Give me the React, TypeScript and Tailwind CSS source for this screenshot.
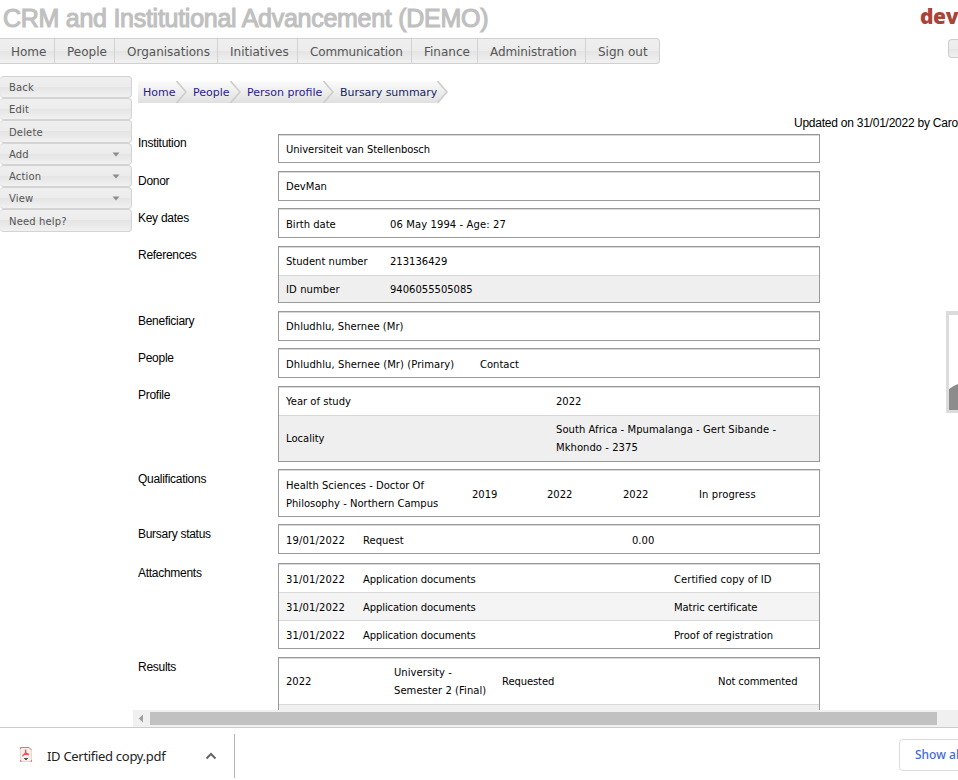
import type { ReactNode } from 'react';

type Cell = { w: string; text: ReactNode };
type Row = { h: string; bg?: string; cells: Cell[] };
type Section = { label: string; box: string; gap: string; labelTop: string; rows: Row[] };

const nav = [
  { text: 'Home', w: 'w-[55px] pl-[11px]' },
  { text: 'People', w: 'w-[60px] pl-3' },
  { text: 'Organisations', w: 'w-[103px] pl-3' },
  { text: 'Initiatives', w: 'w-[80px] pl-3' },
  { text: 'Communication', w: 'w-[114px] pl-3 tracking-[-0.15px]' },
  { text: 'Finance', w: 'w-[66px] pl-3' },
  { text: 'Administration', w: 'w-[108px] pl-3 tracking-[-0.1px]' },
  { text: 'Sign out', w: 'w-[73px] pl-3' },
];

const side = [
  { text: 'Back', h: 'h-[22px]' },
  { text: 'Edit', h: 'h-[22px]' },
  { text: 'Delete', h: 'h-[23px]' },
  { text: 'Add', h: 'h-[22px]', arrow: true },
  { text: 'Action', h: 'h-[22px]', arrow: true },
  { text: 'View', h: 'h-[22px]', arrow: true },
  { text: 'Need help?', h: 'h-[23px]' },
];

const crumbs = [
  { text: 'Home', w: 'w-[49px]', pad: 'pl-[5px]', color: 'text-[#2a1a8c]' },
  { text: 'People', w: 'w-[54px]', pad: 'pl-[6px]', color: 'text-[#2a1a8c]' },
  { text: 'Person profile', w: 'w-[93px]', pad: 'pl-[6px]', color: 'text-[#2a1a8c]' },
  { text: 'Bursary summary', w: 'w-[114px]', pad: 'pl-[6px] tracking-[-0.05px]', color: 'text-[#14265e]' },
];

const sections: Section[] = [
  { label: 'Institution', box: 'h-[29px]', gap: 'mb-2', labelTop: 'pt-0', rows: [{ h: 'h-[29px]', cells: [{ w: 'w-[500px] tracking-[-0.07px]', text: 'Universiteit van Stellenbosch' }] }] },
  { label: 'Donor', box: 'h-[30px]', gap: 'mb-[7px]', labelTop: 'pt-px', rows: [{ h: 'h-[28px]', cells: [{ w: 'w-[500px]', text: 'DevMan' }] }] },
  { label: 'Key dates', box: 'h-[30px]', gap: 'mb-2', labelTop: 'pt-px', rows: [{ h: 'h-[31px]', cells: [{ w: 'w-[104px]', text: 'Birth date' }, { w: 'w-[400px] tracking-[0.1px]', text: '06 May 1994 - Age: 27' }] }] },
  {
    label: 'References', box: 'h-[57px]', gap: 'mb-2', labelTop: 'pt-0', rows: [
      { h: 'h-[28px]', cells: [{ w: 'w-[104px]', text: 'Student number' }, { w: 'w-[400px]', text: '213136429' }] },
      { h: 'h-[28px]', bg: 'bg-[#efefef]', cells: [{ w: 'w-[104px] tracking-[0.1px]', text: 'ID number' }, { w: 'w-[400px]', text: '9406055505085' }] },
    ],
  },
  { label: 'Beneficiary', box: 'h-[30px]', gap: 'mb-[7px]', labelTop: 'pt-px', rows: [{ h: 'h-[28px]', cells: [{ w: 'w-[500px] tracking-[0.05px]', text: 'Dhludhlu, Shernee (Mr)' }] }] },
  { label: 'People', box: 'h-[30px]', gap: 'mb-2', labelTop: 'pt-px', rows: [{ h: 'h-[31px]', cells: [{ w: 'w-[194px] tracking-[0.07px]', text: 'Dhludhlu, Shernee (Mr) (Primary)' }, { w: 'w-[300px]', text: 'Contact' }] }] },
  {
    label: 'Profile', box: 'h-[76px]', gap: 'mb-[7px]', labelTop: 'pt-0', rows: [
      { h: 'h-[28px]', cells: [{ w: 'w-[270px]', text: 'Year of study' }, { w: 'w-[250px]', text: '2022' }] },
      { h: 'h-[46px]', bg: 'bg-[#efefef]', cells: [{ w: 'w-[270px]', text: 'Locality' }, { w: 'w-[260px] tracking-[0.05px]', text: <>South Africa - Mpumalanga - Gert Sibande -<br />Mkhondo - 2375</> }] },
    ],
  },
  {
    label: 'Qualifications', box: 'h-[48px]', gap: 'mb-[7px]', labelTop: 'pt-px', rows: [{
      h: 'h-[49px]', cells: [
        { w: 'w-[186px]', text: <>Health Sciences - Doctor Of<br />Philosophy - Northern Campus</> },
        { w: 'w-[75px]', text: '2019' }, { w: 'w-[76px]', text: '2022' }, { w: 'w-[76px]', text: '2022' }, { w: 'w-[90px] tracking-[0.1px]', text: 'In progress' },
      ],
    }],
  },
  { label: 'Bursary status', box: 'h-[30px]', gap: 'mb-[9px]', labelTop: 'pt-px', rows: [{ h: 'h-[31px]', cells: [{ w: 'w-[77px] tracking-[0.15px]', text: '19/01/2022' }, { w: 'w-[269px]', text: 'Request' }, { w: 'w-[90px]', text: '0.00' }] }] },
  {
    label: 'Attachments', box: 'h-[86px]', gap: 'mb-2', labelTop: 'pt-px', rows: [
      { h: 'h-[28px] pt-[2px]', cells: [{ w: 'w-[77px] tracking-[0.15px]', text: '31/01/2022' }, { w: 'w-[311px] tracking-[-0.1px]', text: 'Application documents' }, { w: 'w-[120px] tracking-[0.05px]', text: 'Certified copy of ID' }] },
      { h: 'h-[28px] pt-[2px]', bg: 'bg-[#f4f4f4]', cells: [{ w: 'w-[77px] tracking-[0.15px]', text: '31/01/2022' }, { w: 'w-[311px] tracking-[-0.1px]', text: 'Application documents' }, { w: 'w-[120px] tracking-[-0.07px]', text: 'Matric certificate' }] },
      { h: 'h-[28px] pt-[2px]', cells: [{ w: 'w-[77px] tracking-[0.15px]', text: '31/01/2022' }, { w: 'w-[311px] tracking-[-0.1px]', text: 'Application documents' }, { w: 'w-[120px]', text: 'Proof of registration' }] },
    ],
  },
  {
    label: 'Results', box: 'h-[96px]', gap: 'mb-2', labelTop: 'pt-px', rows: [
      { h: 'h-[46px]', cells: [{ w: 'w-[108px]', text: '2022' }, { w: 'w-[108px] tracking-[0.05px]', text: <>University -<br />Semester 2 (Final)</> }, { w: 'w-[216px] tracking-[-0.1px]', text: 'Requested' }, { w: 'w-[90px] tracking-[-0.1px]', text: 'Not commented' }] },
      { h: 'h-[46px]', bg: 'bg-[#efefef]', cells: [] },
    ],
  },
];

const glossy = 'bg-[linear-gradient(#efefef_0%,#ececec_50%,#e4e4e4_50%,#f1f1f1_100%)]';

function SectionRow({ s }: { s: Section }) {
  return (
    <div className={`flex shrink-0 ${s.gap}`}>
      <div className={`w-[140px] shrink-0 font-['Liberation_Sans'] text-[12px] leading-[18px] tracking-[-0.28px] ${s.labelTop}`}>{s.label}</div>
      <div className={`w-[542px] shrink-0 overflow-hidden border border-[#999] ${s.box}`}>
        {s.rows.map((r, i) => (
          <div key={i} className={`flex items-center border-t border-[#d8d8d8] pl-[7px] ${r.h} ${r.bg ?? ''}`}>
            {r.cells.map((c, j) => (
              <div key={j} className={`shrink-0 whitespace-nowrap ${c.w}`}>{c.text}</div>
            ))}
          </div>
        ))}
      </div>
    </div>
  );
}

export default function App() {
  return (
    <div className="flex h-[780px] w-[958px] flex-col overflow-hidden bg-white font-['DejaVu_Sans',sans-serif] text-[10px] leading-[18px] text-black">
      <header className="flex h-[38px] shrink-0 justify-between">
        <h1 className="whitespace-nowrap pl-[3px] font-['Liberation_Sans'] text-[25px] leading-9 tracking-[-0.27px] text-[#c0c0c0] [-webkit-text-stroke:1.1px_#c0c0c0]">CRM and Institutional Advancement (DEMO)</h1>
        <div className="w-[38px] overflow-hidden whitespace-nowrap font-['Open_Sans'] text-[21px] font-extrabold leading-[33px] tracking-[-0.4px] text-[#a94439]">dev</div>
      </header>
      <div className="flex h-[38px] shrink-0 items-start justify-between">
        <nav className={`flex h-[26px] w-[660px] overflow-hidden rounded-r border-y border-r border-[#d0d0d0] text-[12px] leading-[26px] text-[#555] ${glossy}`}>
          {nav.map((n, i) => (
            <div key={n.text} className={`shrink-0 whitespace-nowrap ${n.w} ${i < 7 ? 'border-r border-[#d3d3d3]' : ''}`}>{n.text}</div>
          ))}
        </nav>
        <div className={`mt-px h-[19px] w-[10px] rounded-l border-y border-l border-[#ccc] ${glossy}`} />
      </div>
      <div className="flex h-[651px] shrink-0">
        <aside className="w-[133px] shrink-0 text-[#555]">
          {side.map((m) => (
            <div key={m.text} className={`flex w-[132px] items-center justify-between rounded border-t border-r border-b border-[#d3d3d3] pl-[9px] pr-[11px] tracking-[0.15px] ${m.h} ${glossy}`}>
              <span className="pt-[2px]">{m.text}</span>
              {m.arrow && <svg width="8" height="5" viewBox="0 0 8 5"><path d="M0.5 0.5h7L4 4.5z" fill="#8c8c8c" /></svg>}
            </div>
          ))}
        </aside>
        <main className="flex w-[825px] flex-col overflow-hidden">
          <div className="flex h-[634px] flex-col overflow-hidden pl-[5px]">
            <div className="mt-[5px] flex h-[22px] shrink-0 text-[11px] leading-[23px]">
              {crumbs.map((c) => (
                <div key={c.text} className={`flex h-[22px] shrink-0 justify-between ${c.w}`}>
                  <span className={`flex-1 whitespace-nowrap bg-[linear-gradient(#fbfbfb,#e0e0e0)] ${c.pad} ${c.color}`}>{c.text}</span>
                  <svg className="shrink-0" width="11" height="22" viewBox="0 0 11 22">
                    <defs><linearGradient id="crumb" x2="0" y2="1"><stop stopColor="#fbfbfb" /><stop offset="1" stopColor="#e0e0e0" /></linearGradient></defs>
                    <rect width={c.text === 'Bursary summary' ? 0 : 11} height="22" fill="url(#crumb)" />
                    <path d="M0 0L10 11L0 22z" fill="url(#crumb)" />
                    <path d="M0.5 0L10 11L0.5 22" fill="none" stroke="#cdcdcd" strokeWidth="1.6" />
                  </svg>
                </div>
              ))}
            </div>
            <div className="flex h-[31px] shrink-0 items-end whitespace-nowrap pl-[656px] font-['Liberation_Sans'] text-[12px] tracking-[-0.24px]">
              <span className="mb-0.5">Updated on 31/01/2022 by Carol</span>
            </div>
            <div className="flex shrink-0">
              <div className="w-[808px] shrink-0">
                {sections.map((s) => <SectionRow key={s.label} s={s} />)}
              </div>
              <div className="mt-[177px] h-[102px] w-[100px] shrink-0 border-[3px] border-t-4 border-[#dcdcdc]">
                <svg width="94" height="95" viewBox="0 0 94 95"><path d="M0 74Q5 70 12 68V95H0z" fill="#8c8c8c" /></svg>
              </div>
            </div>
          </div>
          <div className="flex h-[17px] shrink-0 items-center bg-[#f0f0f0]">
            <svg className="mx-[5px]" width="7" height="9" viewBox="0 0 7 9"><path d="M5 0.5v8L0.8 4.5z" fill="#a0a0a0" /></svg>
            <div className="h-[13px] w-[787px] bg-[#c1c1c1]" />
          </div>
        </main>
      </div>
      <footer className="flex h-[53px] shrink-0 border-t border-[#ccc] font-['Noto_Sans'] text-[13px]">
        <div className="mt-[6px] flex h-[44px] w-[235px] shrink-0 items-center border-r border-[#b5b5b5] pl-5 text-[#222]">
          <svg className="-mt-1 shrink-0" width="12" height="15" viewBox="0 0 12 15">
            <path d="M0.5 0.5h8.5l2.5 2.5v11.5h-11z" fill="#f3f0ef" stroke="#f3d3cf" />
            <path d="M0.5 2v-1.5h8.5l2.5 2.5M0.5 13v1.5h1M11.5 13v1.5h-1" fill="none" stroke="#f0716a" />
            <path d="M5.7 2.5v3.1L8.8 8M5.7 5.6L2.5 9.2M3.6 7.5L9 7.2" fill="none" stroke="#f2413a" strokeWidth="1.2" />
            <path d="M4 11h4v1H7v1H5v-1H4z" fill="#555" />
          </svg>
          <span className="ml-[15px] w-[158px] shrink-0 whitespace-nowrap tracking-[-0.3px]">ID Certified copy.pdf</span>
          <svg className="shrink-0" width="12" height="8" viewBox="0 0 12 8"><path d="M1.5 6.5L6 2l4.5 4.5" fill="none" stroke="#666" strokeWidth="2" /></svg>
        </div>
        <div className="ml-[664px] mt-[11px] h-[32px] w-[90px] shrink-0 whitespace-nowrap rounded border border-[#dadce0] pl-[15px] text-[12px] font-medium leading-[30px] text-[#3f6bdc]">Show all</div>
      </footer>
    </div>
  );
}
